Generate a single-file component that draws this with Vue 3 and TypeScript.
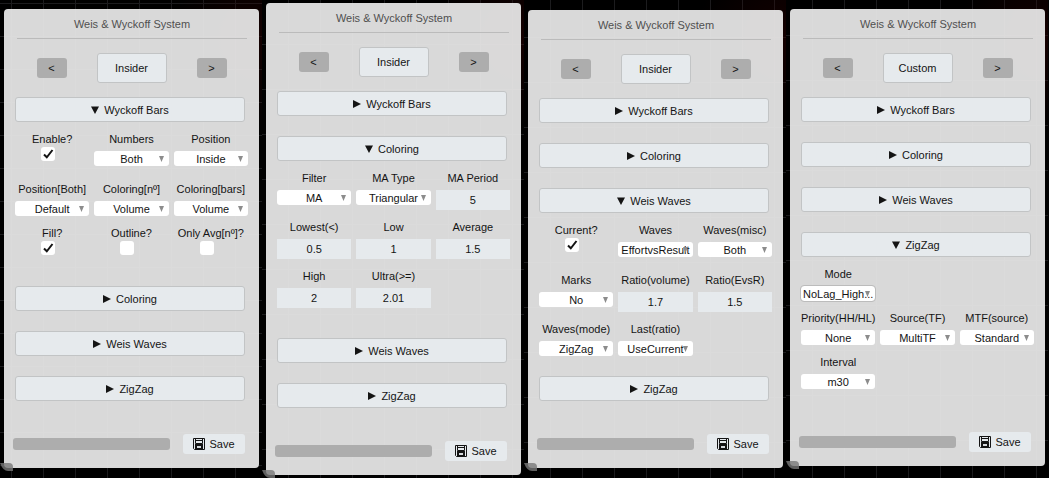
<script setup lang="ts">
import { ref } from 'vue'

type Kind = 'check' | 'select' | 'number'

interface Field {
  label: string
  kind: Kind
  value: string
  checked?: boolean
  outlined?: boolean
}

interface Panel {
  id: string
  preset: string
  open: string
  fields: Field[]
}

const sections = ['Wyckoff Bars', 'Coloring', 'Weis Waves', 'ZigZag']

const check = (label: string, checked: boolean): Field => ({ label, kind: 'check', value: '', checked })
const select = (label: string, value: string, outlined = false): Field => ({ label, kind: 'select', value, outlined })
const number = (label: string, value: string): Field => ({ label, kind: 'number', value })

const panels = ref<Panel[]>([
  {
    id: 'bars',
    preset: 'Insider',
    open: 'Wyckoff Bars',
    fields: [
      check('Enable?', true),
      select('Numbers', 'Both'),
      select('Position', 'Inside'),
      select('Position[Both]', 'Default'),
      select('Coloring[nº]', 'Volume'),
      select('Coloring[bars]', 'Volume'),
      check('Fill?', true),
      check('Outline?', false),
      check('Only Avg[nº]?', false),
    ],
  },
  {
    id: 'coloring',
    preset: 'Insider',
    open: 'Coloring',
    fields: [
      select('Filter', 'MA'),
      select('MA Type', 'Triangular'),
      number('MA Period', '5'),
      number('Lowest(<)', '0.5'),
      number('Low', '1'),
      number('Average', '1.5'),
      number('High', '2'),
      number('Ultra(>=)', '2.01'),
    ],
  },
  {
    id: 'waves',
    preset: 'Insider',
    open: 'Weis Waves',
    fields: [
      check('Current?', true),
      select('Waves', 'EffortvsResult'),
      select('Waves(misc)', 'Both'),
      select('Marks', 'No'),
      number('Ratio(volume)', '1.7'),
      number('Ratio(EvsR)', '1.5'),
      select('Waves(mode)', 'ZigZag'),
      select('Last(ratio)', 'UseCurrent'),
    ],
  },
  {
    id: 'zigzag',
    preset: 'Custom',
    open: 'ZigZag',
    fields: [
      select('Mode', 'NoLag_High...', true),
      select('Priority(HH/HL)', 'None'),
      select('Source(TF)', 'MultiTF'),
      select('MTF(source)', 'Standard'),
      select('Interval', 'm30'),
    ],
  },
])
</script>

<template>
  <main class="board">
    <div v-for="p in panels" :key="p.id" class="column" :class="'column-' + p.id">
      <section class="panel">
        <h1 class="title">Weis &amp; Wyckoff System</h1>
        <div class="presets">
          <button class="step" type="button" aria-label="Previous preset">&lt;</button>
          <button class="preset" type="button">{{ p.preset }}</button>
          <button class="step" type="button" aria-label="Next preset">&gt;</button>
        </div>

        <div class="sections">
          <div v-for="s in sections" :key="s" class="section">
            <button class="toggle" type="button" :aria-expanded="s === p.open">
              <svg class="caret" viewBox="0 0 8 8" aria-hidden="true">
                <path v-if="s === p.open" d="M0 .5H8L4 8Z" />
                <path v-else d="M0 0L8 4L0 8Z" />
              </svg>
              {{ s }}
            </button>
            <div v-if="s === p.open" class="fields">
              <div
                v-for="(f, i) in p.fields"
                :key="f.label"
                class="field"
                :class="['field-' + f.kind, { alone: f.outlined }]"
              >
                <label class="label" :for="p.id + i">{{ f.label }}</label>
                <span v-if="f.kind === 'check'" class="tick">
                  <input :id="p.id + i" v-model="f.checked" class="box" type="checkbox" />
                  <svg v-if="f.checked" class="mark" viewBox="0 0 14 14" aria-hidden="true">
                    <path d="M3 7.5L5.8 10.3L11.5 3" />
                  </svg>
                </span>
                <span v-else-if="f.kind === 'select'" class="picker">
                  <select :id="p.id + i" class="select" :class="{ outlined: f.outlined }">
                    <option>{{ f.value }}</option>
                  </select>
                  <svg class="drop" viewBox="0 0 5 6" aria-hidden="true"><path d="M0 0H5L2.5 6Z" /></svg>
                </span>
                <input v-else :id="p.id + i" v-model="f.value" class="number" type="text" />
              </div>
            </div>
          </div>
        </div>

        <div class="footer">
          <div class="bar"></div>
          <button class="save" type="button">
            <svg class="disk" viewBox="0 0 12 12" aria-hidden="true">
              <path class="line" d="M.5 .5H11.5V11.5H1.5L.5 10.5Z" />
              <path class="line" d="M2.5 .5V5.5H9.5V.5" />
              <path class="line" d="M3 2.5H9" />
              <path class="solid" d="M2 6H10V11.5H2Z" />
              <path class="hole" d="M4 8H8V10H4Z" />
            </svg>
            Save
          </button>
        </div>
      </section>
      <svg class="grip" viewBox="0 0 13 10" aria-hidden="true">
        <path d="M0 0H9Q13 0 13 4V8H8Q3 8 0 0Z" />
      </svg>
    </div>
  </main>
</template>

<style>
body {
  margin: 0;
  background: #000;
}
</style>

<style scoped>
.board {
  box-sizing: border-box;
  display: grid;
  grid-template-columns: repeat(4, minmax(0, 1fr));
  min-height: 100vh;
  padding-right: 1px;
  background: #000;
  color: #141414;
  font-family: 'Liberation Sans', Arial, sans-serif;
  font-size: 11px;
  line-height: 12px;
}

.column {
  box-sizing: border-box;
  display: flow-root;
  padding: 3px 3px 0 4px;
  background-image:
    radial-gradient(circle at 100% 8%, rgba(50, 0, 0, 0.4), transparent 90px),
    linear-gradient(to right, #1c1c1e 1px, transparent 1px),
    linear-gradient(to bottom, #1c1c1e 1px, transparent 1px);
  background-size: auto, 32px 100%, 100% 45px;
  background-position: 0 0, 26px 0, 0 -1px;
}

.column-bars {
  padding-top: 9px;
  background-size: auto, 32px 100%, 100% 33px;
  background-position: 0 0, 11px 0, 0 3px;
}

.column-waves {
  padding-top: 10px;
  background-position: 0 0, 26px 0, 0 -8px;
}

.column-zigzag {
  padding-top: 9px;
  background-position: 0 0, 26px 0, 0 -10px;
}

.panel {
  box-sizing: border-box;
  padding: 0 11px 14px;
  border-radius: 4px;
  background: rgba(238, 238, 238, 0.91);
}

.title {
  margin: 0 1px 0 2px;
  padding: 9px 0 8px;
  border-bottom: 1px solid #bbb;
  color: #505050;
  font-size: 11px;
  font-weight: 400;
  text-align: center;
}

button {
  padding: 0;
  border: 0;
  color: inherit;
  font: inherit;
}

.presets {
  display: flex;
  align-items: center;
  justify-content: center;
  gap: 30px;
  padding: 14px 0;
}

.step {
  width: 30px;
  height: 20px;
  border-radius: 3px;
  background: #adadad;
}

.preset {
  width: 70px;
  height: 30px;
  border: 1px solid #c2c4c5;
  border-radius: 3px;
  background: #e6eaed;
}

.sections {
  display: flex;
  flex-direction: column;
  gap: 20px;
}

.toggle {
  display: flex;
  align-items: center;
  justify-content: center;
  gap: 5px;
  width: calc(100% - 3px);
  height: 25px;
  border: 1px solid #c2c4c5;
  border-radius: 3px;
  background: #e6eaed;
}

.caret {
  width: 8px;
  height: 8px;
  fill: #141414;
}

.fields {
  display: grid;
  grid-template-columns: repeat(3, minmax(0, 1fr));
  gap: 11px 5px;
  padding-top: 11px;
}

.column-coloring .fields,
.column-zigzag .fields {
  padding-bottom: 10px;
}

.field {
  display: flex;
  flex-direction: column;
  align-items: center;
  gap: 6px;
}

.field-check {
  gap: 2px;
  padding-bottom: 11px;
}

.alone {
  grid-column: 1 / -1;
  width: calc((100% - 10px) / 3);
}

.label {
  white-space: nowrap;
}

.tick {
  position: relative;
  width: 14px;
  height: 14px;
  margin-right: 8px;
}

.box {
  display: block;
  width: 14px;
  height: 14px;
  margin: 0;
  border-radius: 3px;
  background: #fff;
  appearance: none;
}

.mark {
  position: absolute;
  inset: 0;
  fill: none;
  stroke: #141414;
  stroke-width: 2;
  pointer-events: none;
}

.picker {
  position: relative;
  display: block;
  width: 100%;
}

.select {
  display: block;
  width: 100%;
  height: 15px;
  padding: 0;
  border: 0;
  border-radius: 3px;
  background: #fff;
  color: inherit;
  font: inherit;
  text-align: center;
  text-align-last: center;
  appearance: none;
}

.outlined {
  outline: 1px solid #bcbcbc;
}

.drop {
  position: absolute;
  top: 5px;
  right: 5px;
  width: 5px;
  height: 6px;
  fill: #8c8c8c;
  pointer-events: none;
}

.number {
  box-sizing: border-box;
  width: 100%;
  height: 20px;
  padding: 0;
  border: 0;
  background: #e6eaed;
  color: inherit;
  font: inherit;
  text-align: center;
}

.footer {
  display: flex;
  align-items: center;
  gap: 13px;
  margin: 33px 3px 0 -2px;
}

.bar {
  flex: 1;
  height: 12px;
  border-radius: 3px;
  background: #adadad;
}

.save {
  display: flex;
  align-items: center;
  justify-content: center;
  gap: 4px;
  width: 62px;
  height: 20px;
  border-radius: 3px;
  background: #e6eaed;
}

.disk {
  width: 12px;
  height: 12px;
}

.disk .line {
  fill: none;
  stroke: #141414;
}

.disk .solid {
  fill: #141414;
}

.disk .hole {
  fill: #d5d9dc;
}

.grip {
  display: block;
  width: 13px;
  height: 10px;
  margin: -5px 0 0 -4px;
  fill: rgba(120, 120, 120, 0.8);
}
</style>
